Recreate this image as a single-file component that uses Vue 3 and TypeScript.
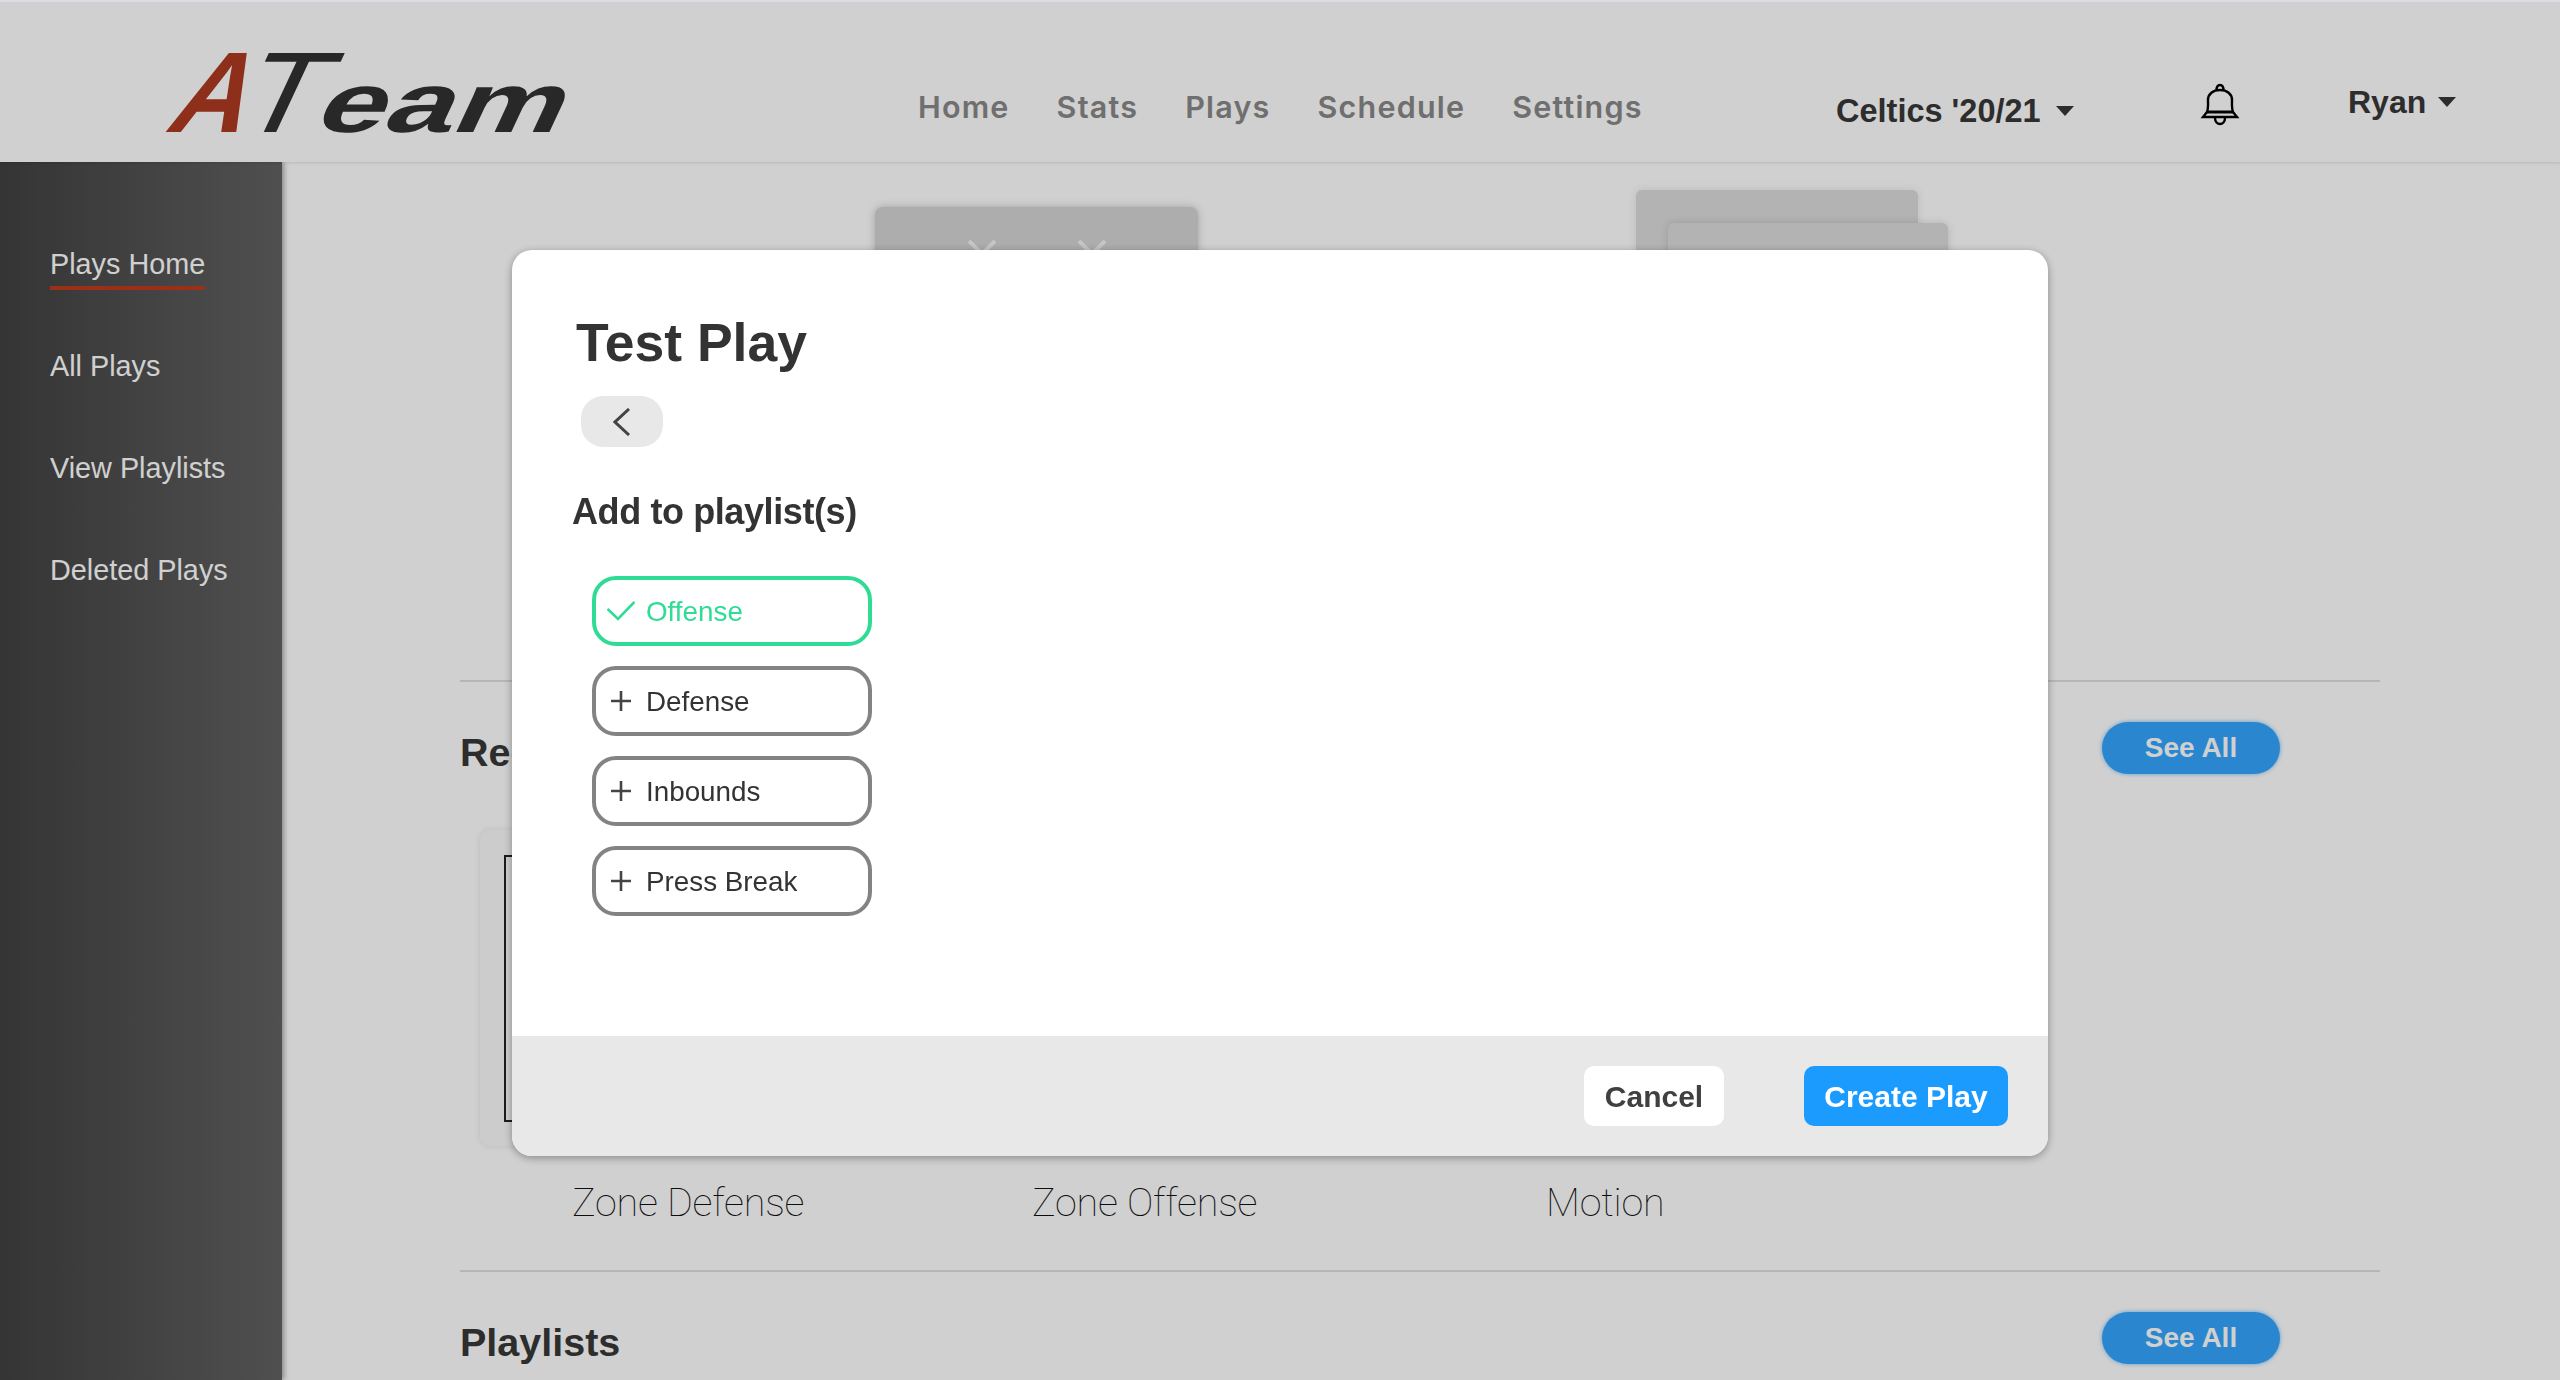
<template>
  <div class="page">
    <header class="topbar">
      <div class="logo" aria-label="ATeam">
        <svg width="420" height="90" viewBox="0 0 420 90">
          <g transform="translate(-2 82) skewX(-25)">
            <text class="logo__a" x="0" y="0" textLength="76" lengthAdjust="spacingAndGlyphs">A</text>
            <text class="logo__t" x="66" y="0" textLength="82" lengthAdjust="spacingAndGlyphs">T</text>
            <text class="logo__eam" x="148" y="0" textLength="246" lengthAdjust="spacingAndGlyphs">eam</text>
          </g>
        </svg>
      </div>
      <nav class="topnav">
        <a v-for="item in navItems" :key="item">{{ item }}</a>
      </nav>
      <div class="team">Celtics '20/21 <span class="caret"></span></div>
      <svg class="bell" width="40" height="44" viewBox="0 0 40 44" fill="none" stroke="#000" stroke-width="2.4">
        <path d="M16.5 8.5 C16.5 5 18 3 20 3 C22 3 23.500 5 23.500 8.500" />
        <path d="M7 30 C8.500 26 8 22 8 18 C8 12 13 8 20 8 C27 8 32 12 32 18 C32 22 31.500 26 33 30 L37 35 L3 35 Z" />
        <path d="M7 30 L33 30" stroke-width="3" />
        <path d="M15 36 C15 40 17.500 42 20 42 C22.500 42 25 40 25 36" />
      </svg>
      <div class="user">Ryan <span class="caret"></span></div>
    </header>

    <div class="layout">
      <aside class="sidebar">
        <a
          v-for="(link, i) in sideLinks"
          :key="link"
          class="sidebar__link"
          :class="{ 'sidebar__link--active': i === 0 }"
        >{{ link }}</a>
      </aside>

      <main class="content">
        <section class="hero">
          <div class="tile">
            <svg v-for="n in 2" :key="n" width="28" height="28" viewBox="0 0 28 28" stroke="#f3f3f3" stroke-width="4">
              <path d="M1 1 L27 27 M27 1 L1 27" />
            </svg>
          </div>
          <div class="stack">
            <div class="stack__front"></div>
          </div>
        </section>

        <section class="block block--recent">
          <div class="block__head">
            <h2>Recent Plays</h2>
            <button class="see-all">See All</button>
          </div>
          <div class="plays">
            <div v-for="play in plays" :key="play" class="play">
              <div class="play__card"><div class="play__court"></div></div>
              <p class="play__name">{{ play }}</p>
            </div>
          </div>
        </section>

        <section class="block block--playlists">
          <div class="block__head">
            <h2>Playlists</h2>
            <button class="see-all">See All</button>
          </div>
        </section>
      </main>
    </div>

    <div class="overlay">
      <div class="modal">
        <div class="modal__body">
          <h1 class="modal__title">Test Play</h1>
          <button class="back" aria-label="Back">
            <svg width="18" height="28" viewBox="0 0 18 28" fill="none" stroke="#444" stroke-width="3">
              <path d="M16 1 L2 14 L16 27" />
            </svg>
          </button>
          <h2 class="modal__sub">Add to playlist(s)</h2>
          <ul class="chips">
            <li
              v-for="list in playlists"
              :key="list.name"
              class="chip"
              :class="{ 'chip--on': list.added }"
            >
              <svg v-if="list.added" width="28" height="20" viewBox="0 0 28 20" fill="none" stroke="#2fdc95" stroke-width="2.6">
                <path d="M0.500 8 L11 18 L27.500 1" />
              </svg>
              <svg v-else width="28" height="22" viewBox="0 0 28 22" fill="none" stroke="#444" stroke-width="2.6">
                <path d="M4 11 L24 11 M14 1 L14 21" />
              </svg>
              <span>{{ list.name }}</span>
            </li>
          </ul>
        </div>
        <footer class="modal__footer">
          <button class="btn btn--cancel">Cancel</button>
          <button class="btn btn--create">Create Play</button>
        </footer>
      </div>
    </div>
  </div>
</template>

<script setup lang="ts">
type Playlist = { name: string; added: boolean }

const navItems = ['Home', 'Stats', 'Plays', 'Schedule', 'Settings']
const sideLinks = ['Plays Home', 'All Plays', 'View Playlists', 'Deleted Plays']
const plays = ['Zone Defense', 'Zone Offense', 'Motion']

const playlists: Playlist[] = [
  { name: 'Offense', added: true },
  { name: 'Defense', added: false },
  { name: 'Inbounds', added: false },
  { name: 'Press Break', added: false },
]
</script>

<style>
html,
body {
  margin: 0;
  height: 100%;
  overflow: hidden;
  background: #fff;
}
</style>

<style scoped>
* {
  box-sizing: border-box;
}

.page {
  height: 1380px;
  display: flex;
  flex-direction: column;
  font-family: 'Liberation Sans', Arial, sans-serif;
  color: #383838;
}

.topbar {
  height: 162px;
  flex: none;
  display: grid;
  grid-template-columns: 918px 918px 364px 148px 1fr;
  align-items: start;
  border-top: 2px solid #dddce4;
  background: #fff;
  box-shadow: 0 1px 3px rgba(0, 0, 0, 0.12);
  position: relative;
  z-index: 1;
}

.logo {
  padding: 48px 0 0 165px;
}

.logo svg {
  display: block;
  overflow: visible;
}

.logo__a {
  font-size: 115px;
  font-weight: 700;
  fill: #ad3a20;
}

.logo__t {
  font-size: 115px;
  fill: #323232;
}

.logo__eam {
  font-size: 85px;
  font-weight: 700;
  fill: #323232;
}

.topnav {
  display: flex;
  gap: 47px;
  padding-top: 89px;
  font-family: Inter, sans-serif;
  font-size: 30.5px;
  font-weight: 600;
  letter-spacing: 1.2px;
  line-height: 32px;
  color: #888;
}

.team {
  padding-top: 90px;
  font-size: 32.5px;
  font-weight: 700;
  line-height: 38px;
  white-space: nowrap;
}

.user {
  padding-top: 81px;
  font-size: 32px;
  font-weight: 700;
  line-height: 38px;
  white-space: nowrap;
}

.caret {
  display: inline-block;
  width: 0;
  height: 0;
  margin-left: 6px;
  vertical-align: 6px;
  border-left: 9px solid transparent;
  border-right: 9px solid transparent;
  border-top: 10px solid #383838;
}

.user .caret {
  margin-left: 3px;
}

.bell {
  margin-top: 80px;
}

.layout {
  flex: 1;
  display: flex;
  min-height: 0;
}

.sidebar {
  width: 282px;
  flex: none;
  display: flex;
  flex-direction: column;
  align-items: flex-start;
  gap: 60px;
  padding: 86px 0 0 50px;
  background: linear-gradient(90deg, #414141, #626262);
  box-shadow: 2px 0 5px rgba(0, 0, 0, 0.35);
}

.sidebar__link {
  height: 42px;
  font-size: 28.8px;
  line-height: 32px;
  color: #fff;
}

.sidebar__link--active {
  border-bottom: 4px solid #bd3b1e;
}

.content {
  flex: 1;
  padding: 0 180px 0 178px;
  min-width: 0;
}

.hero {
  height: 520px;
  position: relative;
  display: flex;
  padding-top: 45px;
  border-bottom: 2px solid #e0e0e0;
}

.tile {
  width: 323px;
  height: 200px;
  margin-left: 415px;
  display: flex;
  justify-content: center;
  gap: 82px;
  padding-top: 33px;
  border-radius: 8px;
  background: #d4d4d4;
  box-shadow: 0 0 8px rgba(0, 0, 0, 0.22);
}

.stack {
  width: 282px;
  height: 200px;
  margin: -17px 0 0 438px;
  position: relative;
  border-radius: 6px;
  background: #dcdcdc;
  box-shadow: 0 0 8px rgba(0, 0, 0, 0.1);
}

.stack__front {
  position: absolute;
  left: 32px;
  top: 33px;
  width: 280px;
  height: 200px;
  border-radius: 6px;
  background: #dcdcdc;
  box-shadow: 0 0 8px rgba(0, 0, 0, 0.14);
}

.block {
  position: relative;
}

.block--recent {
  height: 590px;
  border-bottom: 2px solid #e0e0e0;
}

.block__head {
  display: flex;
  justify-content: space-between;
  align-items: flex-start;
  padding-right: 100px;
}

.block--recent .block__head {
  padding-top: 40px;
}

.block--playlists .block__head {
  padding-top: 40px;
}

.block__head h2 {
  margin: 6px 0 0;
  font-size: 39.5px;
  font-weight: 700;
  line-height: 48px;
}

.see-all {
  width: 178px;
  height: 52px;
  padding: 0;
  border: none;
  border-radius: 26px;
  background: #33a5fe;
  box-shadow: 0 0 4px rgba(51, 165, 254, 0.7);
  color: #fff;
  font-family: inherit;
  font-size: 28px;
  font-weight: 700;
}

.plays {
  display: grid;
  grid-template-columns: 460px 514px 460px;
  margin: 54px 0 0 20px;
}

.play__card {
  width: 380px;
  height: 316px;
  padding: 25px 24px;
  border-radius: 10px;
  background: #fbfbfb;
  box-shadow: 0 0 6px rgba(0, 0, 0, 0.1);
}

.play__court {
  height: 267px;
  border: 2px solid #222;
}

.play__name {
  margin: 33px 0 0 92px;
  font-family: Roboto, sans-serif;
  font-size: 39.5px;
  font-weight: 100;
  letter-spacing: -0.2px;
  line-height: 48px;
  color: #111;
  white-space: nowrap;
}

.overlay {
  position: fixed;
  inset: 2px 0 0;
  z-index: 5;
  display: flex;
  justify-content: center;
  align-items: flex-start;
  padding-top: 248px;
  background: rgba(0, 0, 0, 0.185);
}

.modal {
  width: 1536px;
  height: 906px;
  display: flex;
  flex-direction: column;
  border-radius: 20px;
  overflow: hidden;
  background: #fff;
  box-shadow: 0 2px 8px rgba(0, 0, 0, 0.35);
}

.modal__body {
  flex: 1;
  padding: 62px 0 0 60px;
}

.modal__title {
  margin: 0 0 0 4px;
  font-size: 53.5px;
  font-weight: 700;
  line-height: 62px;
  color: #333;
}

.back {
  display: flex;
  align-items: center;
  justify-content: center;
  width: 82px;
  height: 51px;
  margin: 22px 0 0 9px;
  padding: 0;
  border: none;
  border-radius: 22px;
  background: #e8e8e8;
}

.modal__sub {
  margin: 44px 0 0;
  font-size: 36px;
  font-weight: 700;
  letter-spacing: -0.4px;
  line-height: 42px;
  color: #333;
}

.chips {
  list-style: none;
  display: flex;
  flex-direction: column;
  gap: 20px;
  margin: 43px 0 0 20px;
  padding: 0;
}

.chip {
  width: 280px;
  height: 70px;
  display: flex;
  align-items: center;
  gap: 11px;
  padding-left: 11px;
  border: 4px solid #838383;
  border-radius: 24px;
  font-size: 27.8px;
  color: #333;
}

.chip span {
  margin-top: 2px;
}

.chip--on {
  border-color: #2fdc95;
  color: #2fdc95;
}

.modal__footer {
  height: 120px;
  flex: none;
  display: flex;
  justify-content: flex-end;
  align-items: center;
  gap: 80px;
  padding-right: 40px;
  background: #e8e8e8;
}

.btn {
  height: 60px;
  padding: 2px 0 0;
  border: none;
  border-radius: 10px;
  font-family: inherit;
  font-size: 30px;
  font-weight: 700;
}

.btn--cancel {
  width: 140px;
  background: #fff;
  color: #404040;
}

.btn--create {
  width: 204px;
  background: #1c9bff;
  color: #fff;
}
</style>
